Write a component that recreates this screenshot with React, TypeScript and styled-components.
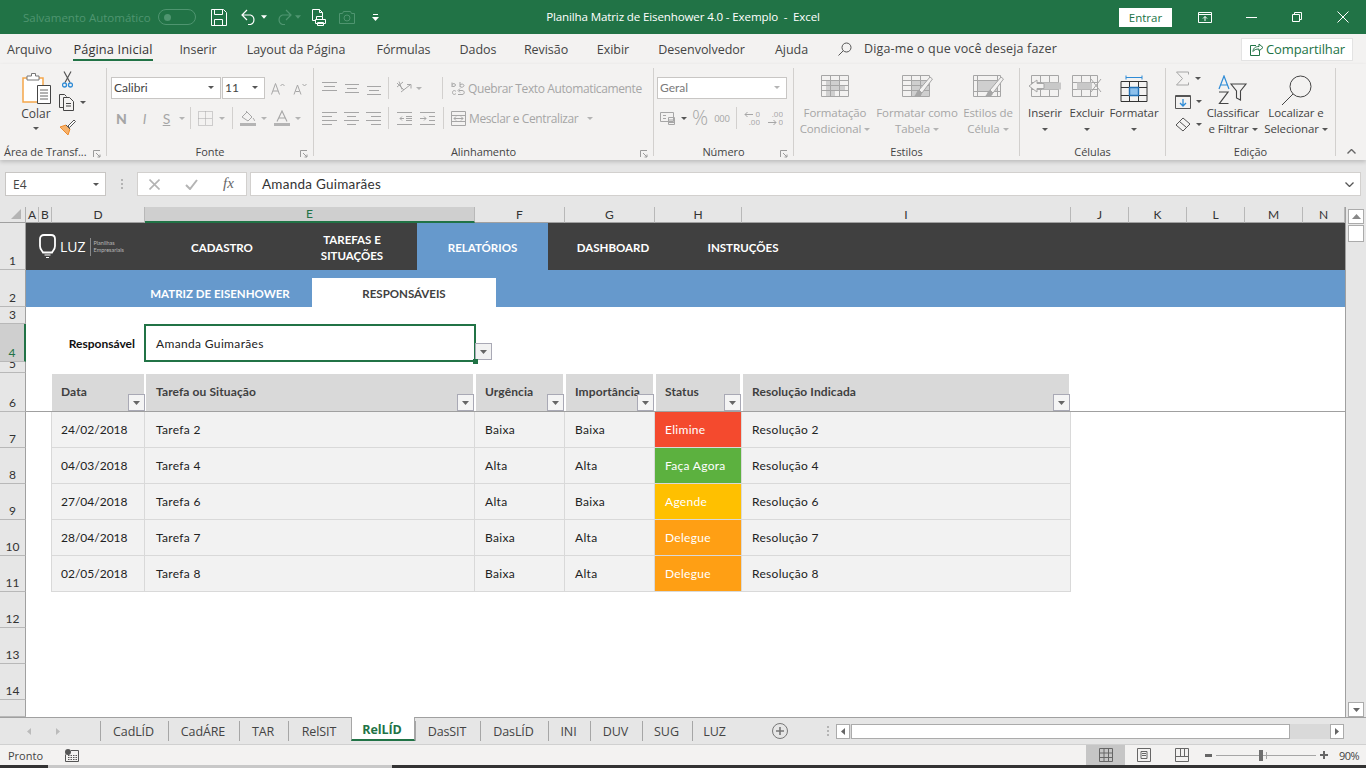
import React from 'react'
import styled, { createGlobalStyle } from 'styled-components'

const UI_FONT = '"Open Sans", "Noto Sans", sans-serif'
const CELL_FONT = 'Lato, "Open Sans", sans-serif'
const GREEN = '#217346'
const OFF = '#a6a6a6'
const INK = '#444444'

const Global = createGlobalStyle`
  html, body { margin: 0; padding: 0; background: #e6e6e6; overflow: hidden; }
  * { box-sizing: border-box; }
  svg { display: block; flex: none; }
`

const Window = styled.div`
  width: 1366px;
  height: 768px;
  display: flex;
  flex-direction: column;
  font-family: ${UI_FONT};
  color: ${INK};
  overflow: hidden;
`

/* ---------- title bar ---------- */
const TitleBar = styled.header`
  height: 34px;
  flex: none;
  background: ${GREEN};
  display: grid;
  grid-template-columns: 1fr auto 1fr;
  align-items: center;
  color: #fff;
`
const Qat = styled.div`
  display: flex;
  align-items: center;
  padding-left: 23px;
`
const AutoSave = styled.span`
  width: 135px;
  font-size: 11.5px;
  white-space: nowrap;
  color: #4f9570;
`
const Toggle = styled.span`
  width: 38px;
  height: 16px;
  border: 1px solid #4f9570;
  border-radius: 8px;
  display: flex;
  align-items: center;
  padding-left: 5px;
  &::before {
    content: '';
    width: 7px;
    height: 7px;
    border-radius: 50%;
    background: #4f9570;
  }
`
const QatItem = styled.span<{ $ml: number }>`
  margin-left: ${p => p.$ml}px;
  display: flex;
`
const DocTitle = styled.div`
  font-size: 11.6px;
  letter-spacing: -0.15px;
  white-space: pre;
  text-align: center;
  padding-bottom: 2px;
`
const WindowControls = styled.div`
  display: flex;
  align-items: center;
  justify-content: flex-end;
`
const SignIn = styled.span`
  width: 53px;
  height: 19px;
  margin-right: 10px;
  background: #fff;
  color: ${GREEN};
  font-size: 11.5px;
  display: flex;
  align-items: center;
  justify-content: center;
`
const WinBtn = styled.span`
  width: 46px;
  display: flex;
  justify-content: center;
`

/* ---------- menu row ---------- */
const MenuRow = styled.nav`
  height: 30px;
  flex: none;
  background: #f3f2f1;
  display: flex;
  align-items: center;
`
const MenuTabs = styled.div`
  display: grid;
  grid-template-columns: 59px 108px 62px 134px 81px 68px 68px 66px 111px 69px;
  height: 30px;
`
const MenuTab = styled.div`
  display: flex;
  justify-content: center;
  padding-top: 6px;
  white-space: nowrap;
`
const MenuLabel = styled.span<{ $active?: boolean }>`
  height: 21px;
  font-size: ${p => (p.$active ? 12.8 : 12.5)}px;
  line-height: 19px;
  letter-spacing: ${p => (p.$active ? 0.1 : -0.05)}px;
  border-bottom: 2px solid ${p => (p.$active ? GREEN : 'transparent')};
  color: ${p => (p.$active ? '#333' : INK)};
  font-weight: ${p => (p.$active ? 500 : 400)};
`
const SearchSlot = styled.span`
  margin-left: 12px;
`
const TellMe = styled.span`
  margin-left: 12px;
  font-size: 12.5px;
  letter-spacing: 0.15px;
  padding-bottom: 1px;
`
const ShareBtn = styled.div`
  margin-left: auto;
  margin-right: 13px;
  width: 112px;
  height: 23px;
  background: #fff;
  border: 1px solid #e3e3e3;
  display: flex;
  align-items: center;
  gap: 2px;
  padding-left: 7px;
  color: ${GREEN};
  font-size: 13px;
  font-weight: 500;
  letter-spacing: -0.1px;
`

/* ---------- ribbon ---------- */
const Ribbon = styled.section`
  height: 96px;
  flex: none;
  background: #f3f2f1;
  padding-top: 4px;
  display: grid;
  grid-template-columns: 107px 207px 340px 140px 226px 146px 170px 1fr;
  box-shadow: 0 2px 4px rgba(0, 0, 0, 0.18);
  position: relative;
  z-index: 2;
`
const Group = styled.div`
  height: 88px;
  border-right: 1px solid #d2d0ce;
  display: flex;
  flex-direction: column;
`
const GroupBody = styled.div`
  height: 77px;
  flex: none;
  display: flex;
`
const ToolStack = styled.div`
  padding-top: 9px;
  display: flex;
  flex-direction: column;
  gap: 8px;
`
const ToolRow = styled.div`
  height: 22px;
  display: flex;
  align-items: center;
`
const Slot = styled.span<{ $ml?: number; $w?: number }>`
  margin-left: ${p => p.$ml ?? 0}px;
  width: ${p => (p.$w ? `${p.$w}px` : 'auto')};
  display: flex;
  justify-content: center;
  align-items: center;
  flex: none;
`
const Divider = styled.span<{ $ml: number }>`
  margin-left: ${p => p.$ml}px;
  width: 1px;
  height: 22px;
  background: #d2d0ce;
  flex: none;
`
const GroupLabel = styled.div<{ $left?: boolean }>`
  height: 14px;
  flex: none;
  font-size: 11px;
  line-height: 14px;
  letter-spacing: -0.05px;
  white-space: nowrap;
  display: flex;
  align-items: center;
  justify-content: ${p => (p.$left ? 'flex-start' : 'center')};
  padding-left: ${p => (p.$left ? 4 : 0)}px;
  position: relative;
`
const Launcher = styled.span`
  position: absolute;
  right: 5px;
  top: 5px;
`
const Caret = styled.span<{ $off?: boolean }>`
  display: inline-block;
  width: 0;
  height: 0;
  border-left: 3px solid transparent;
  border-right: 3px solid transparent;
  border-top: 3px solid ${p => (p.$off ? '#b4b4b4' : '#555')};
  flex: none;
`
const PasteCol = styled.div`
  width: 58px;
  padding: 4px 0 0 14px;
  display: flex;
  flex-direction: column;
  align-items: center;
  font-size: 12px;
`
const PasteLabel = styled.span`
  height: 16px;
  line-height: 16px;
  margin-top: 1px;
  margin-bottom: 5px;
`
const ClipTools = styled.div`
  padding-top: 3px;
  display: flex;
  flex-direction: column;
`
const ClipTool = styled.div<{ $mt: number; $ml: number }>`
  margin-top: ${p => p.$mt}px;
  margin-left: ${p => p.$ml}px;
  display: flex;
  align-items: center;
  gap: 5px;
`
const ComboBox = styled.div<{ $w: number; $ml: number; $off?: boolean }>`
  width: ${p => p.$w}px;
  margin-left: ${p => p.$ml}px;
  height: 22px;
  background: #fff;
  border: 1px solid #c8c6c4;
  font-family: ${CELL_FONT};
  font-size: 12px;
  color: ${p => (p.$off ? '#7a7a7a' : INK)};
  display: flex;
  align-items: center;
  justify-content: space-between;
  padding: 0 6px 1px 2px;
  flex: none;
`
const FontLetter = styled.span<{ $bold?: boolean; $italic?: boolean; $under?: boolean }>`
  font-family: ${CELL_FONT};
  font-size: 14px;
  color: ${OFF};
  font-weight: ${p => (p.$bold ? 900 : 400)};
  font-style: ${p => (p.$italic ? 'italic' : 'normal')};
  text-decoration: ${p => (p.$under ? 'underline' : 'none')};
`
const OffText = styled.span<{ $ml: number }>`
  margin-left: ${p => p.$ml}px;
  font-size: 12px;
  letter-spacing: -0.38px;
  color: ${OFF};
  white-space: nowrap;
`
const Percent = styled.span`
  font-size: 20px;
  line-height: 22px;
  font-weight: 300;
  color: ${OFF};
`
const Thousands = styled.span`
  font-size: 9.5px;
  letter-spacing: -0.2px;
  color: ${OFF};
`
const BigBtn = styled.div<{ $w: number; $off?: boolean }>`
  width: ${p => p.$w}px;
  display: flex;
  flex-direction: column;
  align-items: center;
  padding-top: 7px;
  font-size: 11.5px;
  line-height: 16px;
  letter-spacing: -0.1px;
  color: ${p => (p.$off ? OFF : INK)};
  white-space: nowrap;
  flex: none;
`
const BigIcon = styled.div`
  height: 30px;
  display: flex;
  align-items: flex-start;
`
const BigLine = styled.span`
  height: 16px;
  display: flex;
  align-items: center;
  gap: 3px;
`
const EditCol = styled.div`
  width: 35px;
  padding: 2px 0 0 9px;
  display: flex;
  flex-direction: column;
  gap: 7px;
`
const EditTool = styled.div`
  height: 16px;
  display: flex;
  align-items: center;
  gap: 5px;
`
const CollapseCell = styled.div`
  display: flex;
  align-items: flex-end;
  justify-content: flex-end;
  height: 88px;
  padding: 0 10px 2px 0;
`

/* ---------- formula bar ---------- */
const FormulaBar = styled.div`
  height: 47px;
  flex: none;
  background: #e6e6e6;
  padding: 12px 5px 0;
  display: flex;
  align-items: flex-start;
`
const NameBox = styled.div`
  width: 101px;
  height: 24px;
  background: #fff;
  border: 1px solid #c8c6c4;
  display: flex;
  align-items: center;
  justify-content: space-between;
  padding: 0 6px 0 7px;
  font-size: 12px;
`
const FormulaGrip = styled.div`
  width: 31px;
  height: 24px;
  display: flex;
  align-items: center;
  justify-content: center;
`
const FormulaBtns = styled.div`
  width: 110px;
  height: 24px;
  background: #fff;
  border: 1px solid #d2d0ce;
  display: flex;
  align-items: center;
  padding-left: 11px;
  gap: 25px;
`
const FxLabel = styled.span`
  font-family: "Liberation Serif", serif;
  font-style: italic;
  font-size: 15px;
  color: #666;
  padding-bottom: 2px;
`
const FormulaInput = styled.div`
  margin-left: 3px;
  width: 1111px;
  height: 24px;
  background: #fff;
  border: 1px solid #d2d0ce;
  display: flex;
  align-items: center;
  justify-content: space-between;
  padding: 0 6px 0 11px;
  font-family: ${CELL_FONT};
  font-size: 13.5px;
  letter-spacing: 0.25px;
  color: #333;
`

/* ---------- sheet ---------- */
const Sheet = styled.main`
  height: 510px;
  flex: none;
  background: #fff;
  display: grid;
  grid-template-columns: 26px 13px 13px 93px 330px 90px 90px 87px 329px 58px 58px 58px 58px 42px 21px;
  grid-template-rows: 16px 47px 37px 17px 38px 11px 39px repeat(8, 36px) 17px;
  font-family: ${CELL_FONT};
  font-size: 12px;
  color: #222;
`
const Corner = styled.div`
  grid-column: 1;
  grid-row: 1;
  background: #e6e6e6;
  border-right: 1px solid #b0b0b0;
  border-bottom: 1px solid #a0a0a0;
  display: flex;
  align-items: flex-end;
  justify-content: flex-end;
  padding: 0 4px 3px 0;
`
const ColHead = styled.div<{ $active?: boolean }>`
  grid-row: 1;
  background: ${p => (p.$active ? '#cfcfcf' : '#e6e6e6')};
  border-right: 1px solid #b8b8b8;
  border-bottom: ${p => (p.$active ? `2px solid ${GREEN}` : '1px solid #a0a0a0')};
  color: ${p => (p.$active ? GREEN : '#333')};
  display: flex;
  align-items: center;
  justify-content: center;
  font-size: 12px;
  line-height: 14px;
`
const RowHead = styled.div<{ $row: number; $active?: boolean }>`
  grid-column: 1;
  grid-row: ${p => p.$row};
  background: ${p => (p.$active ? '#cfcfcf' : '#e6e6e6')};
  border-right: ${p => (p.$active ? `2px solid ${GREEN}` : '1px solid #a0a0a0')};
  border-bottom: 1px solid #b8b8b8;
  color: ${p => (p.$active ? GREEN : '#333')};
  display: flex;
  align-items: flex-end;
  justify-content: center;
  line-height: 14px;
  padding-bottom: 1px;
  overflow: hidden;
`
const NavBar = styled.div`
  grid-column: 2 / 15;
  grid-row: 2;
  background: #404040;
  display: flex;
`
const Logo = styled.div`
  width: 131px;
  display: flex;
  align-items: center;
  padding-left: 13px;
  color: #fff;
`
const LogoWord = styled.span`
  margin-left: 4px;
  font-family: ${UI_FONT};
  font-size: 14px;
  font-weight: 500;
  padding-right: 4px;
  border-right: 1px solid #8a8a8a;
  line-height: 18px;
`
const LogoSmall = styled.span`
  margin-left: 3px;
  font-size: 5.5px;
  line-height: 6.5px;
  color: #b8b8b8;
`
const NavItem = styled.div<{ $active?: boolean }>`
  width: ${p => (p.$active ? 131 : 130)}px;
  background: ${p => (p.$active ? '#6699cc' : 'transparent')};
  color: #fff;
  font-weight: 700;
  font-size: 11.5px;
  line-height: 16px;
  text-align: center;
  display: flex;
  align-items: center;
  justify-content: center;
  padding-top: 2px;
`
const SubNav = styled.div`
  grid-column: 2 / 15;
  grid-row: 3;
  background: #6699cc;
  display: flex;
  padding-left: 102px;
`
const SubTab = styled.div<{ $active?: boolean }>`
  width: 184px;
  margin-top: 8px;
  background: ${p => (p.$active ? '#fff' : 'transparent')};
  color: ${p => (p.$active ? '#404040' : '#fff')};
  font-weight: 700;
  font-size: 11.5px;
  display: flex;
  align-items: center;
  justify-content: center;
  padding-top: 2px;
`
const FieldLabel = styled.div`
  grid-column: 2 / 5;
  grid-row: 5;
  font-weight: 700;
  color: #111;
  display: flex;
  align-items: center;
  justify-content: flex-end;
  padding: 0 10px 0 0;
`
const SelectedCell = styled.div`
  grid-column: 5;
  grid-row: 5;
  margin: 0 -1px 0 -1px;
  border: 2px solid ${GREEN};
  position: relative;
  display: flex;
  align-items: center;
  padding-left: 10px;
  letter-spacing: 0.35px;
  color: #222;
`
const DropBtn = styled.span`
  position: absolute;
  left: 100%;
  bottom: 0;
  margin-left: 1px;
  width: 17px;
  height: 17px;
  background: #f2f2f2;
  border: 1px solid #a9a9b5;
  display: flex;
  align-items: center;
  justify-content: center;
`
const FillHandle = styled.span`
  position: absolute;
  right: -4px;
  bottom: -4px;
  width: 5px;
  height: 5px;
  background: ${GREEN};
`
const HeaderRule = styled.div`
  grid-column: 2 / 15;
  grid-row: 7;
  border-bottom: 1px solid #a0a0a0;
`
const HeaderCell = styled.div<{ $col: number }>`
  grid-column: ${p => p.$col};
  grid-row: 7;
  margin: 1px ${p => (p.$col === 4 ? 1 : 2)}px 1px ${p => (p.$col === 4 ? 0 : 1)}px;
  background: #d9d9d9;
  color: #404040;
  font-weight: 700;
  padding: 10px 0 0 ${p => (p.$col === 5 ? 10 : 9)}px;
  position: relative;
  white-space: nowrap;
  letter-spacing: 0.1px;
`
const FilterBtn = styled.span`
  position: absolute;
  right: -1px;
  bottom: 0;
  width: 17px;
  height: 17px;
  background: #f4f4f4;
  border: 1px solid #a9a9b5;
  display: flex;
  align-items: center;
  justify-content: center;
`
const DataCell = styled.div<{ $col: number; $row: number; $fill?: string }>`
  grid-column: ${p => p.$col};
  grid-row: ${p => p.$row};
  background: ${p => p.$fill ?? '#f2f2f2'};
  color: ${p => (p.$fill ? '#fff' : '#222')};
  border-right: 1px solid #d9d9d9;
  border-bottom: 1px solid #d9d9d9;
  border-left: ${p => (p.$col === 4 ? '1px solid #d9d9d9' : '0')};
  margin-left: ${p => (p.$col === 4 ? -1 : 0)}px;
  display: flex;
  align-items: center;
  padding-left: ${p => (p.$col === 4 ? 9 : p.$col === 5 ? 11 : 10)}px;
  letter-spacing: ${p => (p.$col === 4 ? 0 : 0.3)}px;
`
const VScroll = styled.aside`
  grid-column: 15;
  grid-row: 1 / -1;
  background: #e6e6e6;
  border-left: 1px solid #a0a0a0;
  padding: 2px 2px 0 2px;
  display: flex;
  flex-direction: column;
`
const ScrollBtn = styled.span`
  height: 15px;
  background: #fff;
  border: 1px solid #ababab;
  display: flex;
  align-items: center;
  justify-content: center;
  flex: none;
`
const ScrollThumb = styled.span`
  height: 17px;
  margin-top: 1px;
  background: #fff;
  border: 1px solid #ababab;
  flex: none;
`
const ScrollGap = styled.span`
  flex: 1;
`

/* ---------- sheet tabs ---------- */
const TabBar = styled.footer`
  height: 28px;
  flex: none;
  background: #e6e6e6;
  border-top: 1px solid #a0a0a0;
  border-bottom: 1px solid #d0d0d0;
  display: flex;
  align-items: flex-start;
`
const TabNav = styled.div`
  width: 100px;
  height: 26px;
  display: flex;
  align-items: center;
  padding-left: 27px;
  gap: 25px;
`
const SheetTab = styled.div<{ $w: number; $active?: boolean }>`
  width: ${p => p.$w}px;
  height: ${p => (p.$active ? 24 : 20)}px;
  margin-top: ${p => (p.$active ? -1 : 3)}px;
  flex: none;
  background: ${p => (p.$active ? '#fff' : 'transparent')};
  color: ${p => (p.$active ? GREEN : INK)};
  font-weight: ${p => (p.$active ? 700 : 400)};
  font-size: 12.5px;
  letter-spacing: -0.1px;
  display: flex;
  align-items: center;
  justify-content: center;
  border-left: 1px solid #a6a6a6;
  border-right: ${p => (p.$active ? '1px solid #a6a6a6' : '0')};
  border-bottom: ${p => (p.$active ? `2px solid ${GREEN}` : '0')};
  padding: ${p => (p.$active ? 2 : 0)}px 2px 0 0;
`
const TabEnd = styled.div`
  width: 82px;
  height: 26px;
  display: flex;
  align-items: center;
  padding-left: 34px;
`
const TabDots = styled.div`
  width: 16px;
  height: 26px;
  display: flex;
  align-items: center;
  justify-content: center;
`
const HScroll = styled.div`
  margin-top: 6px;
  width: 510px;
  height: 15px;
  display: flex;
  background: #d9d9d9;
`
const HBtn = styled.span`
  width: 14px;
  background: #fff;
  border: 1px solid #ababab;
  display: flex;
  align-items: center;
  justify-content: center;
  flex: none;
`
const HThumb = styled.span`
  margin-left: 1px;
  width: 439px;
  background: #fff;
  border: 1px solid #ababab;
  flex: none;
`
const HGap = styled.span`
  flex: 1;
  background: #d9d9d9;
`
const HEndGap = styled.span`
  width: 2px;
  background: #e6e6e6;
  flex: none;
`

/* ---------- status bar ---------- */
const StatusBar = styled.div`
  height: 20px;
  flex: none;
  background: #f3f2f1;
  display: flex;
  align-items: center;
  font-size: 11px;
`
const StatusText = styled.span`
  width: 65px;
  padding-left: 8px;
`
const ViewBtn = styled.span<{ $active?: boolean; $ml: number; $w: number }>`
  margin-left: ${p => p.$ml}px;
  width: ${p => p.$w}px;
  height: 20px;
  background: ${p => (p.$active ? '#c6c6c6' : 'transparent')};
  display: flex;
  align-items: center;
  justify-content: center;
  flex: none;
`
const ZoomTrack = styled.div`
  margin-left: 4px;
  width: 100px;
  height: 1px;
  background: #a6a6a6;
  position: relative;
  flex: none;
`
const ZoomThumb = styled.span`
  position: absolute;
  left: 43px;
  top: -5px;
  width: 4px;
  height: 11px;
  background: #6e6e6e;
`
const ZoomTick = styled.span`
  position: absolute;
  left: 50px;
  top: -3px;
  width: 1px;
  height: 7px;
  background: #a6a6a6;
`
const ZoomValue = styled.span`
  margin-left: 11px;
  font-size: 11px;
  letter-spacing: -0.5px;
`
const TaskStrip = styled.div`
  height: 3px;
  flex: none;
  display: grid;
  grid-template-columns: 48px 344px 1fr;
  background: #333;
`
const TaskLight = styled.span`
  grid-column: 2;
  background: #c8c8c8;
`

/* ---------- icons ---------- */
const Down = ({ c = '#666', w = 7 }: { c?: string; w?: number }) => (
  <svg width={w} height={4} viewBox="0 0 7 4"><path d="M0 0h7L3.5 4z" fill={c} /></svg>
)
const Lines = ({ rows, c = OFF }: { rows: number[][]; c?: string }) => (
  <svg width={16} height={16} viewBox="0 0 16 16">
    {rows.map(([x1, x2, y], i) => <path key={i} d={`M${x1} ${y + 0.5}H${x2}`} stroke={c} fill="none" />)}
  </svg>
)
const Launch = () => (
  <svg width={8} height={8} viewBox="0 0 8 8" fill="none" stroke="#9a9a9a">
    <path d="M.5 7V.5H7M3 3l4 4M7 4.5V7H4.5" />
  </svg>
)
const Save = () => (
  <svg width={16} height={17} viewBox="0 0 16 17" fill="none" stroke="#fff">
    <path d="M.5.5h12l3 3v13H.5z" /><path d="M3.5.5v5h8v-5M3.5 16.500v-6h8v6" />
  </svg>
)
const Undo = ({ c = '#fff' }: { c?: string }) => (
  <svg width={16} height={16} viewBox="0 0 16 16" fill="none" stroke={c} strokeWidth={1.2}>
    <path d="M6 1L1 6l5 5M1 6h8.500a5 5 0 0 1 0 9.500H7" />
  </svg>
)
const Redo = ({ c = '#fff' }: { c?: string }) => (
  <svg width={16} height={16} viewBox="0 0 16 16" fill="none" stroke={c} strokeWidth={1.2}>
    <path d="M10 1l5 5-5 5M15 6H6.500a5 5 0 0 0 0 9.500H9" />
  </svg>
)
const PrintPreview = () => (
  <svg width={15} height={17} viewBox="0 0 15 17" fill="none" stroke="#fff">
    <path d="M3.500 11.500H.5V.5h7l3 3v4" /><path d="M7.500.5v3h3" />
    <path d="M4.500 7.500h6v3h-6zM3.500 10.500h10v4h-10zM5.500 13.500h6v3h-6z" />
  </svg>
)
const Camera = () => (
  <svg width={16} height={15} viewBox="0 0 16 15" fill="none" stroke="#4f9570">
    <path d="M.5 3.500h3l1-2h7l1 2h3v10H.5z" /><circle cx="8" cy="8" r="3" />
  </svg>
)
const QatMore = () => (
  <svg width={7} height={7} viewBox="0 0 7 7" fill="#fff"><path d="M1 0h5v1H1zM0 3h7L3.500 7z" /></svg>
)
const RibbonDisplay = () => (
  <svg width={14} height={11} viewBox="0 0 14 11" fill="none" stroke="#fff">
    <path d="M.5.5h13v10H.5zM.5 2.500h13M7 9V4.500M5 6.500l2-2 2 2" />
  </svg>
)
const Minimize = () => <svg width={11} height={1} viewBox="0 0 11 1"><path d="M0 .5h11" stroke="#fff" /></svg>
const Restore = () => (
  <svg width={10} height={10} viewBox="0 0 10 10" fill="none" stroke="#fff">
    <path d="M.5 2.500h7v7h-7zM2.500 2.500v-2h7v7h-2" />
  </svg>
)
const CloseX = () => (
  <svg width={12} height={12} viewBox="0 0 12 12" fill="none" stroke="#fff"><path d="M.5.5l11 11M11.500.5l-11 11" /></svg>
)
const Search = () => (
  <svg width={14} height={14} viewBox="0 0 14 14" fill="none" stroke="#555">
    <circle cx="8.500" cy="5.500" r="4.500" /><path d="M5.300 8.700L.5 13.500" />
  </svg>
)
const Share = () => (
  <svg width={15} height={14} viewBox="0 0 15 14" fill="none" stroke={GREEN}>
    <path d="M7 3.500H1.500v10h9V9" /><path d="M4 9.500c0-3 2-5 6-5V2l4 3.500L10 9V7c-3 0-5 .8-6 2.500z" />
  </svg>
)
const PasteIcon = () => (
  <svg width={31} height={33} viewBox="0 0 31 33" fill="none">
    <path d="M2 6h20v24H2z" fill="#fff" stroke="#f5a64a" strokeWidth={1.5} />
    <path d="M6 8V4h4.500V1.500h4V4H18v4z" fill="#fff" stroke="#777" />
    <path d="M16.500 13.500h13v18h-13z" fill="#fff" stroke="#444" />
    <path d="M19 18h8M19 21h8M19 24h8M19 27h8" stroke="#666" />
  </svg>
)
const Scissors = () => (
  <svg width={11} height={17} viewBox="0 0 11 17" fill="none">
    <path d="M2 .5l6 11M9 .5l-6 11" stroke="#555" strokeWidth={1.2} />
    <circle cx="2.500" cy="14" r="2" stroke="#2e8bd6" strokeWidth={1.3} />
    <circle cx="8.500" cy="14" r="2" stroke="#2e8bd6" strokeWidth={1.3} />
  </svg>
)
const CopyIcon = () => (
  <svg width={16} height={17} viewBox="0 0 16 17" fill="none" stroke="#444">
    <path d="M4.500 13.500h-4V.5h5l2 2" /><path d="M4.500 3.500h6l4 4v9h-10z" fill="#f3f2f1" />
    <path d="M7 9.500h5M7 12h5" />
  </svg>
)
const Brush = () => (
  <svg width={17} height={17} viewBox="0 0 17 17" fill="none">
    <path d="M1 8l6-2 4 4-2 6z" fill="#f7b26a" stroke="#ee8a2c" />
    <path d="M9 7l6-6 1.500 1.500-6 6z" fill="#fff" stroke="#555" />
    <path d="M7 6l4 4" stroke="#555" />
  </svg>
)
const GrowA = ({ up }: { up: boolean }) => (
  <svg width={14} height={13} viewBox="0 0 14 13" fill="none" stroke={OFF}>
    <path d={up ? 'M.5 12.500L4.500 1.500l4 11M2 9h5' : 'M1 12.500L4.500 3l3.500 9.500M2.500 9.500h4'} />
    <path d={up ? 'M9.500 4l2-2 2 2' : 'M9.500 2l2 2 2-2'} />
  </svg>
)
const BorderIcon = () => (
  <svg width={15} height={15} viewBox="0 0 15 15" fill="none" stroke={OFF} strokeDasharray="1 1">
    <path d="M.5.500h14v14H.5zM7.500.500v14M.5 7.500h14" />
  </svg>
)
const FillIcon = () => (
  <svg width={16} height={16} viewBox="0 0 16 16" fill="none">
    <path d="M2 7l5-5 5 5-4 4z" stroke={OFF} /><path d="M6 1l3 3" stroke={OFF} />
    <path d="M13 8c1 1.500 1.500 2 1.500 3" stroke={OFF} />
    <path d="M0 13h16v3H0z" fill="#b4b4b4" />
  </svg>
)
const ColorA = () => (
  <svg width={16} height={16} viewBox="0 0 16 16" fill="none">
    <path d="M3 11.500L8 1l5 10.500M5 8h6" stroke={OFF} strokeWidth={1.1} />
    <path d="M0 13h16v3H0z" fill="#b4b4b4" />
  </svg>
)
const Orient = () => (
  <svg width={17} height={15} viewBox="0 0 17 15" fill="none" stroke={OFF}>
    <path d="M1 2l7 7M3 .5l3 8M7 1L1 6M5 11l9-7M11 3.500h4v4" />
  </svg>
)
const Indent = ({ flip }: { flip?: boolean }) => (
  <svg width={15} height={13} viewBox="0 0 15 13" fill="none" stroke={OFF}>
    <path d="M0 .5h15M0 12.500h15" />
    {flip ? <path d="M0 6.500h6M4 4.500l2 2-2 2M9 4.500h6M9 8.500h6" /> : <path d="M9 6.500h6M3 6.500h4M5 4.500l-2 2 2 2M9 4.500h6M9 8.500h6" />}
  </svg>
)
const WrapIcon = () => (
  <svg width={15} height={15} viewBox="0 0 15 15" fill="none" stroke={OFF}>
    <path d="M1 6V1.500M1 3.500c1-1.500 3.500-1 3.500.5S2 6 1 5M9 1v5M9 4c1-1.500 4-1 4 .5S10 7 9 5.500M5 10.500c-2-2-3.500-.5-3.500 1s1.500 3 3.500 1M7 13.500h4c3 0 3-4 0-4H8M9 7.500l-2 2 2 2" />
  </svg>
)
const MergeIcon = () => (
  <svg width={15} height={15} viewBox="0 0 15 15" fill="none" stroke={OFF}>
    <path d="M.5.500h14v14H.5zM.5 4.500h14M.5 10.500h14M3 7.500h9M5 5.500l-2 2 2 2M10 5.500l2 2-2 2" />
  </svg>
)
const CurrencyIcon = () => (
  <svg width={15} height={13} viewBox="0 0 15 13" fill="none" stroke={OFF}>
    <path d="M.5.500h13v9H.5zM3 3.500h3M3 6.500h3" /><path d="M8.500 5.500h6v7h-6zM8.500 8h6M8.500 10.500h6" />
  </svg>
)
const DecimalIcon = ({ more }: { more?: boolean }) => (
  <svg width={16} height={17} viewBox="0 0 16 17" fontFamily="Open Sans, sans-serif" fontSize={8} fill={OFF}>
    <text x={16} y={7} textAnchor="end">{more ? '0' : '.00'}</text>
    <text x={16} y={15} textAnchor="end">{more ? '.00' : '0'}</text>
    <path d={more ? 'M1 4.500h8M3.500 2L1 4.500 3.500 7' : 'M1 12.500h8M6.500 10L9 12.500 6.500 15'} stroke={OFF} fill="none" />
  </svg>
)
const StyleGrid = ({ kind }: { kind: 'cond' | 'table' | 'cell' }) => (
  <svg width={kind === 'cond' ? 28 : 31} height={24} viewBox={`0 0 ${kind === 'cond' ? 28 : 31} 24`} fill="none">
    <path d="M.5.500h27v21H.5z" stroke={OFF} />
    {kind === 'cond' && <path d="M5 5h14v5h5v5h-10v6H5z" fill="#cfcfcf" />}
    {kind === 'table' && <path d="M9 6h18v15H9z" fill="#cfcfcf" />}
    {kind === 'cell' && <path d="M5 5h19v11H5z" fill="#cfcfcf" />}
    {kind !== 'cell' && <path d="M.5 5.500h27M.5 10.500h27M.5 15.500h27M9.500.500v21M18.500.500v21" stroke={OFF} />}
    {kind === 'cell' && <path d="M.5 5.500h27M.5 16.500h27M4.500.500v21M24.500.500v21" stroke={OFF} />}
    {kind !== 'cond' && (
      <>
        <path d="M17 15L28 2l2.500 2L20 18z" fill="#f3f2f1" stroke={OFF} />
        <path d="M14 22c-1 0-2-.5-2-1 2-.5 2-5 5-6l3 3c-.5 3-3 4-6 4z" fill="#a6a6a6" />
      </>
    )}
  </svg>
)
const InsertIcon = () => (
  <svg width={32} height={22} viewBox="0 0 32 22" fill="none">
    <path d="M2.500.500h27v21h-27zM11.500.500v21M20.500.500v21M2.500 7.500h27M2.500 14.500h27" stroke={OFF} />
    <path d="M13 7.500h19v7H13z" fill="#c8c8c8" />
    <path d="M0 11l8-6v3.500h7v5H8V17z" fill="#f3f2f1" stroke={OFF} />
  </svg>
)
const DeleteIcon = () => (
  <svg width={30} height={22} viewBox="0 0 30 22" fill="none">
    <path d="M.5.500h25v21H.5zM9.500.500v21M18.500.500v21M.5 7.500h25M.5 14.500h25" stroke={OFF} />
    <path d="M5 7.500h15v7H5z" fill="#c8c8c8" />
    <path d="M19 4l10 13M29 4L19 17" stroke={OFF} />
  </svg>
)
const FormatIcon = () => (
  <svg width={28} height={28} viewBox="0 0 28 28" fill="none">
    <path d="M6 2.500h16M6 .5v4M22 .5v4" stroke="#2e8bd6" />
    <path d="M10 12h9v8h-9z" fill="#8cc0ec" />
    <path d="M1 6.500h26v20H1zM1 12.500h26M1 20.500h26M9.500 6.500v20M18.500 6.500v20" stroke="#333" />
    <path d="M9.500 12.500h9v8h-9z" stroke="#1f6fb5" strokeWidth={1.4} />
  </svg>
)
const Sigma = () => (
  <svg width={15} height={15} viewBox="0 0 15 15" fill="none" stroke={OFF}><path d="M13.500 3.500V1H1.500l6 6.500-6 6.500h12v-2.500" /></svg>
)
const FillDown = () => (
  <svg width={16} height={15} viewBox="0 0 16 15" fill="none">
    <path d="M.5 1.500h15v13H.5z" stroke="#555" /><path d="M.5 2.500h15" stroke="#555" />
    <path d="M8 5v7M5 9l3 3 3-3" stroke="#2e8bd6" strokeWidth={1.3} />
  </svg>
)
const Eraser = () => (
  <svg width={16} height={15} viewBox="0 0 16 15" fill="none" stroke="#555">
    <path d="M1 8l7-7 7 6-7 7z" /><path d="M4.500 4.500l7 6" />
  </svg>
)
const SortFilter = () => (
  <svg width={30} height={30} viewBox="0 0 30 30" fill="none">
    <path d="M1 14L6 1l5 13M3 10h6" stroke="#2e8bd6" strokeWidth={1.2} />
    <path d="M1 17h9L1.500 28.500h9" stroke="#444" strokeWidth={1.2} />
    <path d="M13 9h15l-5.500 7v9l-4-2v-7z" stroke="#444" strokeWidth={1.1} />
  </svg>
)
const BigSearch = () => (
  <svg width={31} height={31} viewBox="0 0 31 31" fill="none" stroke="#444">
    <circle cx="19.500" cy="11.500" r="10.500" /><path d="M12 19L1 30" />
  </svg>
)
const Chevron = () => (
  <svg width={9} height={5} viewBox="0 0 9 5" fill="none" stroke="#666" strokeWidth={1.4}><path d="M.5 4.500l4-4 4 4" /></svg>
)
const GripDots = ({ c = '#b4b4b4' }: { c?: string }) => (
  <svg width={2} height={10} viewBox="0 0 2 10" fill={c}><path d="M0 0h2v2H0zM0 4h2v2H0zM0 8h2v2H0z" /></svg>
)
const Bulb = () => (
  <svg width={17} height={25} viewBox="0 0 17 25" fill="none" stroke="#fff">
    <path d="M5 1h7c2.500 0 4 1.500 4 4v7c0 3.500-2 4.500-3 6.500H4C3 16.500 1 15.500 1 12V5c0-2.500 1.500-4 4-4z" strokeWidth={1.8} />
    <path d="M5.500 21h6M7 23.500h3" strokeWidth={1.2} />
  </svg>
)
const CalcIcon = () => (
  <svg width={14} height={13} viewBox="0 0 14 13" fill="none">
    <circle cx="3" cy="3" r="3" fill="#555" /><path d="M.5 5.500v7h13V1.500H6" stroke="#555" />
    <path d="M3 6.500h9M3 8.500h9M3 10.500h9" stroke="#555" strokeDasharray="1.500 1" />
  </svg>
)
const ViewNormal = () => (
  <svg width={14} height={14} viewBox="0 0 14 14" fill="none" stroke="#666">
    <path d="M.5.500h13v13H.5zM.5 5h13M.5 9.500h13M5 .5v13M9.500.5v13" />
  </svg>
)
const ViewPage = () => (
  <svg width={14} height={14} viewBox="0 0 14 14" fill="none" stroke="#666">
    <path d="M.5.500h13v13H.5zM4 3.500h6v7H4zM5 5.500h4M5 7.500h4" />
  </svg>
)
const ViewBreak = () => (
  <svg width={14} height={14} viewBox="0 0 14 14" fill="none" stroke="#666">
    <path d="M.5.500h13v13H.5zM.5 8.500h13M5.500.500v8M9.500.500v8" />
  </svg>
)
const PlusCircle = () => (
  <svg width={16} height={16} viewBox="0 0 16 16" fill="none" stroke="#777">
    <circle cx="8" cy="8" r="7.500" /><path d="M8 4v8M4 8h8" strokeWidth={1.6} />
  </svg>
)
const Side = ({ left, c = '#666' }: { left?: boolean; c?: string }) => (
  <svg width={4} height={7} viewBox="0 0 4 7"><path d={left ? 'M4 0v7L0 3.500z' : 'M0 0v7l4-3.500z'} fill={c} /></svg>
)

/* ---------- data ---------- */
const MENU = ['Arquivo', 'Página Inicial', 'Inserir', 'Layout da Página', 'Fórmulas', 'Dados', 'Revisão', 'Exibir', 'Desenvolvedor', 'Ajuda']
const COLS = ['A', 'B', 'D', 'E', 'F', 'G', 'H', 'I', 'J', 'K', 'L', 'M', 'N']
const ROW_HEADS = [1, 2, 3, 4, 5, 6, 7, 8, 9, 10, 11, 12, 13, 14]
const HEADERS: [number, string][] = [
  [4, 'Data'], [5, 'Tarefa ou Situação'], [6, 'Urgência'], [7, 'Importância'], [8, 'Status'], [9, 'Resolução Indicada'],
]
const FILLS: Record<string, string> = {
  Elimine: '#f44a2e',
  'Faça Agora': '#5cb13f',
  Agende: '#ffc000',
  Delegue: '#ff9f14',
}
const TASKS = [
  ['24/02/2018', 'Tarefa 2', 'Baixa', 'Baixa', 'Elimine', 'Resolução 2'],
  ['04/03/2018', 'Tarefa 4', 'Alta', 'Alta', 'Faça Agora', 'Resolução 4'],
  ['27/04/2018', 'Tarefa 6', 'Alta', 'Baixa', 'Agende', 'Resolução 6'],
  ['28/04/2018', 'Tarefa 7', 'Baixa', 'Alta', 'Delegue', 'Resolução 7'],
  ['02/05/2018', 'Tarefa 8', 'Baixa', 'Alta', 'Delegue', 'Resolução 8'],
]
const SHEET_TABS: [string, number][] = [
  ['CadLÍD', 68], ['CadÁRE', 71], ['TAR', 49], ['RelSIT', 63], ['RelLÍD', 64], ['DasSIT', 65],
  ['DasLÍD', 68], ['INI', 42], ['DUV', 52], ['SUG', 50], ['LUZ', 46],
]

const App = () => (
  <Window>
    <Global />
    <TitleBar>
      <Qat>
        <AutoSave>Salvamento Automático</AutoSave>
        <Toggle />
        <QatItem $ml={15}><Save /></QatItem>
        <QatItem $ml={14}><Undo /></QatItem>
        <QatItem $ml={4}><Down c="#fff" w={6} /></QatItem>
        <QatItem $ml={9}><Redo c="#4f9570" /></QatItem>
        <QatItem $ml={3}><Down c="#4f9570" w={6} /></QatItem>
        <QatItem $ml={11}><PrintPreview /></QatItem>
        <QatItem $ml={12}><Camera /></QatItem>
        <QatItem $ml={17}><QatMore /></QatItem>
      </Qat>
      <DocTitle>{'Planilha Matriz de Eisenhower 4.0 - Exemplo  -  Excel'}</DocTitle>
      <WindowControls>
        <SignIn>Entrar</SignIn>
        <WinBtn><RibbonDisplay /></WinBtn>
        <WinBtn><Minimize /></WinBtn>
        <WinBtn><Restore /></WinBtn>
        <WinBtn><CloseX /></WinBtn>
      </WindowControls>
    </TitleBar>

    <MenuRow>
      <MenuTabs>
        {MENU.map(m => (
          <MenuTab key={m}><MenuLabel $active={m === 'Página Inicial'}>{m}</MenuLabel></MenuTab>
        ))}
      </MenuTabs>
      <SearchSlot><Search /></SearchSlot>
      <TellMe>Diga-me o que você deseja fazer</TellMe>
      <ShareBtn><Share />Compartilhar</ShareBtn>
    </MenuRow>

    <Ribbon>
      <Group>
        <GroupBody>
          <PasteCol>
            <PasteIcon />
            <PasteLabel>Colar</PasteLabel>
            <Caret />
          </PasteCol>
          <ClipTools>
            <ClipTool $mt={0} $ml={4}><Scissors /></ClipTool>
            <ClipTool $mt={6} $ml={1}><CopyIcon /><Caret /></ClipTool>
            <ClipTool $mt={8} $ml={1}><Brush /></ClipTool>
          </ClipTools>
        </GroupBody>
        <GroupLabel $left>Área de Transf...<Launcher><Launch /></Launcher></GroupLabel>
      </Group>

      <Group>
        <GroupBody>
          <ToolStack>
            <ToolRow>
              <ComboBox $w={110} $ml={4}>Calibri<Caret /></ComboBox>
              <ComboBox $w={43} $ml={1}>11<Caret /></ComboBox>
              <Slot $ml={6}><GrowA up /></Slot>
              <Slot $ml={8}><GrowA up={false} /></Slot>
            </ToolRow>
            <ToolRow>
              <Slot $ml={8} $w={13}><FontLetter $bold>N</FontLetter></Slot>
              <Slot $ml={10} $w={13}><FontLetter $italic>I</FontLetter></Slot>
              <Slot $ml={9} $w={13}><FontLetter $under>S</FontLetter></Slot>
              <Slot $ml={6}><Caret $off /></Slot>
              <Divider $ml={5} />
              <Slot $ml={7}><BorderIcon /></Slot>
              <Slot $ml={6}><Caret $off /></Slot>
              <Divider $ml={7} />
              <Slot $ml={7}><FillIcon /></Slot>
              <Slot $ml={5}><Caret $off /></Slot>
              <Slot $ml={7}><ColorA /></Slot>
              <Slot $ml={5}><Caret $off /></Slot>
            </ToolRow>
          </ToolStack>
        </GroupBody>
        <GroupLabel>Fonte<Launcher><Launch /></Launcher></GroupLabel>
      </Group>

      <Group>
        <GroupBody>
          <ToolStack>
            <ToolRow>
              <Slot $ml={8}><Lines rows={[[0, 15, 2], [2, 13, 6], [0, 15, 10]]} /></Slot>
              <Slot $ml={6}><Lines rows={[[1, 15, 4], [3, 13, 8], [1, 15, 12]]} /></Slot>
              <Slot $ml={6}><Lines rows={[[1, 15, 6], [3, 13, 10], [1, 15, 14]]} /></Slot>
              <Divider $ml={6} />
              <Slot $ml={7}><Orient /></Slot>
              <Slot $ml={3}><Caret $off /></Slot>
              <Divider $ml={20} />
              <Slot $ml={8}><WrapIcon /></Slot>
              <OffText $ml={2}>Quebrar Texto Automaticamente</OffText>
            </ToolRow>
            <ToolRow>
              <Slot $ml={8}><Lines rows={[[0, 15, 2], [0, 10, 6], [0, 15, 10], [0, 10, 14]]} /></Slot>
              <Slot $ml={6}><Lines rows={[[0, 15, 2], [3, 12, 6], [0, 15, 10], [3, 12, 14]]} /></Slot>
              <Slot $ml={6}><Lines rows={[[0, 15, 2], [5, 15, 6], [0, 15, 10], [5, 15, 14]]} /></Slot>
              <Divider $ml={6} />
              <Slot $ml={8}><Indent /></Slot>
              <Slot $ml={8}><Indent flip /></Slot>
              <Divider $ml={8} />
              <Slot $ml={7}><MergeIcon /></Slot>
              <OffText $ml={3}>Mesclar e Centralizar</OffText>
              <Slot $ml={9}><Caret $off /></Slot>
            </ToolRow>
          </ToolStack>
        </GroupBody>
        <GroupLabel>Alinhamento<Launcher><Launch /></Launcher></GroupLabel>
      </Group>

      <Group>
        <GroupBody>
          <ToolStack>
            <ToolRow>
              <ComboBox $w={130} $ml={3} $off>Geral<Caret $off /></ComboBox>
            </ToolRow>
            <ToolRow>
              <Slot $ml={6}><CurrencyIcon /></Slot>
              <Slot $ml={6}><Caret /></Slot>
              <Slot $ml={4} $w={18}><Percent>%</Percent></Slot>
              <Slot $ml={4} $w={18}><Thousands>000</Thousands></Slot>
              <Divider $ml={5} />
              <Slot $ml={7}><DecimalIcon more /></Slot>
              <Slot $ml={7}><DecimalIcon /></Slot>
            </ToolRow>
          </ToolStack>
        </GroupBody>
        <GroupLabel>Número<Launcher><Launch /></Launcher></GroupLabel>
      </Group>

      <Group>
        <GroupBody>
          <BigBtn $w={82} $off>
            <BigIcon><StyleGrid kind="cond" /></BigIcon>
            <BigLine>Formatação</BigLine>
            <BigLine>Condicional<Caret $off /></BigLine>
          </BigBtn>
          <BigBtn $w={82} $off>
            <BigIcon><StyleGrid kind="table" /></BigIcon>
            <BigLine>Formatar como</BigLine>
            <BigLine>Tabela<Caret $off /></BigLine>
          </BigBtn>
          <BigBtn $w={60} $off>
            <BigIcon><StyleGrid kind="cell" /></BigIcon>
            <BigLine>Estilos de</BigLine>
            <BigLine>Célula<Caret $off /></BigLine>
          </BigBtn>
        </GroupBody>
        <GroupLabel>Estilos</GroupLabel>
      </Group>

      <Group>
        <GroupBody>
          <BigBtn $w={50}>
            <BigIcon><InsertIcon /></BigIcon>
            <BigLine>Inserir</BigLine>
            <BigLine><Caret /></BigLine>
          </BigBtn>
          <BigBtn $w={34}>
            <BigIcon><DeleteIcon /></BigIcon>
            <BigLine>Excluir</BigLine>
            <BigLine><Caret /></BigLine>
          </BigBtn>
          <BigBtn $w={60}>
            <BigIcon><FormatIcon /></BigIcon>
            <BigLine>Formatar</BigLine>
            <BigLine><Caret /></BigLine>
          </BigBtn>
        </GroupBody>
        <GroupLabel>Células</GroupLabel>
      </Group>

      <Group>
        <GroupBody>
          <EditCol>
            <EditTool><Sigma /><Caret /></EditTool>
            <EditTool><FillDown /><Caret /></EditTool>
            <EditTool><Eraser /><Caret /></EditTool>
          </EditCol>
          <BigBtn $w={64}>
            <BigIcon><SortFilter /></BigIcon>
            <BigLine>Classificar</BigLine>
            <BigLine>e Filtrar<Caret /></BigLine>
          </BigBtn>
          <BigBtn $w={62}>
            <BigIcon><BigSearch /></BigIcon>
            <BigLine>Localizar e</BigLine>
            <BigLine>Selecionar<Caret /></BigLine>
          </BigBtn>
        </GroupBody>
        <GroupLabel>Edição</GroupLabel>
      </Group>
      <CollapseCell><Chevron /></CollapseCell>
    </Ribbon>

    <FormulaBar>
      <NameBox>E4<Caret /></NameBox>
      <FormulaGrip><GripDots /></FormulaGrip>
      <FormulaBtns>
        <svg width={11} height={11} viewBox="0 0 11 11" fill="none" stroke="#b4b4b4" strokeWidth={1.6}><path d="M.5.5l10 10M10.500.5l-10 10" /></svg>
        <svg width={13} height={11} viewBox="0 0 13 11" fill="none" stroke="#b4b4b4" strokeWidth={2}><path d="M1 6l4 4 7-9" /></svg>
        <FxLabel>fx</FxLabel>
      </FormulaBtns>
      <FormulaInput>Amanda Guimarães<svg width={9} height={5} viewBox="0 0 9 5" fill="none" stroke="#555" strokeWidth={1.3}><path d="M.5.5l4 4 4-4" /></svg></FormulaInput>
    </FormulaBar>

    <Sheet>
      <Corner>
        <svg width={10} height={10} viewBox="0 0 10 10"><path d="M10 0v10H0z" fill="#b4b4b4" /></svg>
      </Corner>
      {COLS.map(c => <ColHead key={c} $active={c === 'E'}>{c}</ColHead>)}
      {ROW_HEADS.map(n => (
        <RowHead key={n} $row={n + 1} $active={n === 4}>{n}</RowHead>
      ))}
      <RowHead $row={16} />

      <NavBar>
        <Logo>
          <Bulb />
          <LogoWord>LUZ</LogoWord>
          <LogoSmall>Planilhas<br />Empresariais</LogoSmall>
        </Logo>
        <NavItem>CADASTRO</NavItem>
        <NavItem>TAREFAS E<br />SITUAÇÕES</NavItem>
        <NavItem $active>RELATÓRIOS</NavItem>
        <NavItem>DASHBOARD</NavItem>
        <NavItem>INSTRUÇÕES</NavItem>
      </NavBar>
      <SubNav>
        <SubTab>MATRIZ DE EISENHOWER</SubTab>
        <SubTab $active>RESPONSÁVEIS</SubTab>
      </SubNav>

      <FieldLabel>Responsável</FieldLabel>
      <SelectedCell>
        Amanda Guimarães
        <DropBtn><Down /></DropBtn>
        <FillHandle />
      </SelectedCell>

      <HeaderRule />
      {HEADERS.map(([col, label]) => (
        <HeaderCell key={col} $col={col}>
          {label}
          <FilterBtn><Down /></FilterBtn>
        </HeaderCell>
      ))}
      {TASKS.map((task, r) =>
        task.map((value, c) => (
          <DataCell key={`${r}-${c}`} $col={c + 4} $row={r + 8} $fill={c === 4 ? FILLS[value] : undefined}>
            {value}
          </DataCell>
        )),
      )}

      <VScroll>
        <ScrollBtn><svg width={9} height={5} viewBox="0 0 9 5"><path d="M4.500 0L9 5H0z" fill="#888" /></svg></ScrollBtn>
        <ScrollThumb />
        <ScrollGap />
        <ScrollBtn><Down c="#666" w={9} /></ScrollBtn>
      </VScroll>
    </Sheet>

    <TabBar>
      <TabNav><Side left c="#bbb" /><Side c="#bbb" /></TabNav>
      {SHEET_TABS.map(([name, w]) => (
        <SheetTab key={name} $w={w} $active={name === 'RelLÍD'}>{name}</SheetTab>
      ))}
      <TabEnd><PlusCircle /></TabEnd>
      <TabDots><GripDots /></TabDots>
      <HScroll>
        <HBtn><Side left /></HBtn>
        <HThumb />
        <HGap />
        <HBtn><Side /></HBtn>
        <HEndGap />
      </HScroll>
    </TabBar>

    <StatusBar>
      <StatusText>Pronto</StatusText>
      <CalcIcon />
      <ViewBtn $active $ml={1007} $w={39}><ViewNormal /></ViewBtn>
      <ViewBtn $ml={0} $w={38}><ViewPage /></ViewBtn>
      <ViewBtn $ml={0} $w={38}><ViewBreak /></ViewBtn>
      <Slot $ml={4}><svg width={7} height={3} viewBox="0 0 7 3"><path d="M0 0h7v3H0z" fill="#666" /></svg></Slot>
      <ZoomTrack><ZoomThumb /><ZoomTick /></ZoomTrack>
      <Slot $ml={4}><svg width={8} height={8} viewBox="0 0 8 8"><path d="M3 0h2v8H3zM0 3h8v2H0z" fill="#666" /></svg></Slot>
      <ZoomValue>90%</ZoomValue>
    </StatusBar>
    <TaskStrip><TaskLight /></TaskStrip>
  </Window>
)

export default App
